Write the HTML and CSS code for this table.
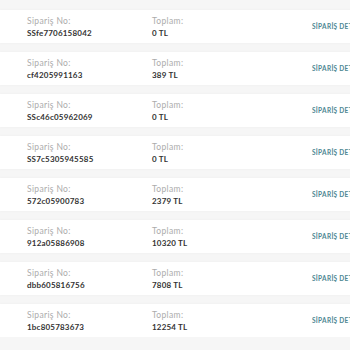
FILE: index.html
```html
<!DOCTYPE html>
<html lang="tr">
<head>
<meta charset="utf-8">
<link rel="stylesheet" href="styles.css">
</head>
<body>
<div class="list">
  <div class="order"><div class="cell"><span class="label">Sipariş No:</span><span class="value">SSfe7706158042</span></div><div class="cell"><span class="label">Toplam:</span><span class="value">0 TL</span></div><a class="link">SİPARİŞ DETAYI</a></div>
  <div class="order"><div class="cell"><span class="label">Sipariş No:</span><span class="value">cf4205991163</span></div><div class="cell"><span class="label">Toplam:</span><span class="value">389 TL</span></div><a class="link">SİPARİŞ DETAYI</a></div>
  <div class="order"><div class="cell"><span class="label">Sipariş No:</span><span class="value">SSc46c05962069</span></div><div class="cell"><span class="label">Toplam:</span><span class="value">0 TL</span></div><a class="link">SİPARİŞ DETAYI</a></div>
  <div class="order"><div class="cell"><span class="label">Sipariş No:</span><span class="value">SS7c5305945585</span></div><div class="cell"><span class="label">Toplam:</span><span class="value">0 TL</span></div><a class="link">SİPARİŞ DETAYI</a></div>
  <div class="order"><div class="cell"><span class="label">Sipariş No:</span><span class="value">572c05900783</span></div><div class="cell"><span class="label">Toplam:</span><span class="value">2379 TL</span></div><a class="link">SİPARİŞ DETAYI</a></div>
  <div class="order"><div class="cell"><span class="label">Sipariş No:</span><span class="value">912a05886908</span></div><div class="cell"><span class="label">Toplam:</span><span class="value">10320 TL</span></div><a class="link">SİPARİŞ DETAYI</a></div>
  <div class="order"><div class="cell"><span class="label">Sipariş No:</span><span class="value">dbb605816756</span></div><div class="cell"><span class="label">Toplam:</span><span class="value">7808 TL</span></div><a class="link">SİPARİŞ DETAYI</a></div>
  <div class="order"><div class="cell"><span class="label">Sipariş No:</span><span class="value">1bc805783673</span></div><div class="cell"><span class="label">Toplam:</span><span class="value">12254 TL</span></div><a class="link">SİPARİŞ DETAYI</a></div>
</div>
</body>
</html>
```
FILE: styles.css
```css
html, body {
  margin: 0;
  padding: 0;
  overflow: hidden;
  background: #f6f6f6;
  font-family: Lato, "Noto Sans", sans-serif;
}
.list {
  display: flex;
  flex-direction: column;
  gap: 9px;
  padding-top: 10px;
  width: 420px;
}
.order {
  display: grid;
  grid-template-columns: 125px 160px auto;
  align-items: center;
  height: 33px;
  padding-left: 27px;
  background: #fff;
  box-shadow: 0 0 3px rgba(0,0,0,0.04);
}
.cell {
  display: flex;
  flex-direction: column;
  gap: 2px;
}
.label {
  font-size: 8.5px;
  line-height: 10px;
  letter-spacing: 0.35px;
  color: #acacac;
}
.value {
  font-size: 8px;
  line-height: 10px;
  letter-spacing: 0.2px;
  font-weight: 700;
  color: #333;
}
.link {
  font-size: 6.5px;
  font-weight: 700;
  color: #4d8792;
  letter-spacing: 0.3px;
  white-space: nowrap;
}
```
